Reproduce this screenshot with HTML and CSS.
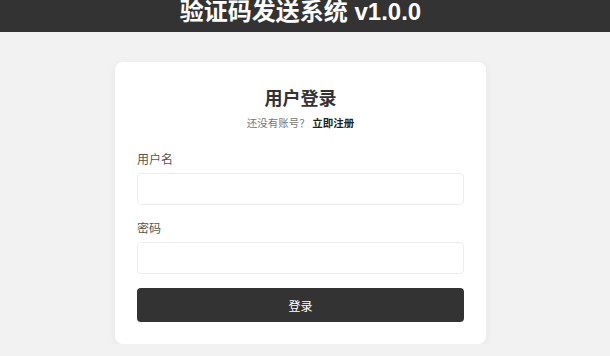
FILE: index.html
```html
<!DOCTYPE html>
<html lang="zh-CN">
<head>
    <meta charset="UTF-8">
    <meta name="viewport" content="width=device-width, initial-scale=1.0">
    <title>验证码发送系统</title>
    <link rel="stylesheet" href="styles.css">
</head>
<body>

    <!-- Header -->
    <header class="header">
        <h1>验证码发送系统 v1.0.0</h1>
    </header>

    <main class="page">
        <div class="container">
            <h2>用户登录</h2>
            <p class="switch-tip">还没有账号？ <a href="#">立即注册</a></p>

            <form class="login-form">
                <label for="username">用户名</label>
                <input type="text" id="username">

                <label for="password">密码</label>
                <input type="password" id="password">

                <button type="button" class="login-btn">登录</button>
            </form>
        </div>
    </main>

</body>
</html>
```

FILE: styles.css
```css
* {
    margin: 0;
    padding: 0;
    box-sizing: border-box;
}
body {
    font-family: "Noto Sans CJK SC", "Liberation Sans", Arial, sans-serif;
    background-color: #f2f2f2;
    color: #333;
}
.header {
    background: #333;
    height: 32px;
    overflow: hidden;
    text-align: center;
    padding-right: 9px;
}
.header h1 {
    color: white;
    font-family: "Liberation Sans", "Noto Sans CJK SC", Arial, sans-serif;
    font-size: 24px;
    font-weight: bold;
    line-height: 22px;
    padding-top: 1px;
}
.page {
    padding-right: 9px;
}
.container {
    width: 371px;
    margin: 30px auto 0;
    background: white;
    padding: 22px 22px 22px;
    border-radius: 8px;
    box-shadow: 0px 2px 10px rgba(0, 0, 0, 0.06);
    text-align: center;
}
h2 {
    font-size: 18px;
    font-weight: bold;
    color: #333;
    line-height: 26px;
}
.switch-tip {
    font-size: 10.5px;
    color: #777;
    margin-top: 6px;
    line-height: 14px;
}
.switch-tip a {
    color: #222;
    font-weight: bold;
    text-decoration: none;
}
.login-form {
    text-align: left;
    margin-top: 20px;
}
.login-form label {
    display: block;
    font-size: 12px;
    color: #555;
    line-height: 18px;
    margin-bottom: 5px;
}
.login-form input {
    display: block;
    width: 100%;
    height: 32px;
    border: 1px solid #ececec;
    border-radius: 4px;
    margin-bottom: 14px;
    background: white;
}
.login-btn {
    display: block;
    width: 100%;
    height: 34px;
    margin-top: 1px;
    background: #333;
    color: white;
    border: none;
    border-radius: 4px;
    font-family: inherit;
    font-size: 12px;
    cursor: pointer;
}
.login-btn:hover {
    background: #222;
}
```
